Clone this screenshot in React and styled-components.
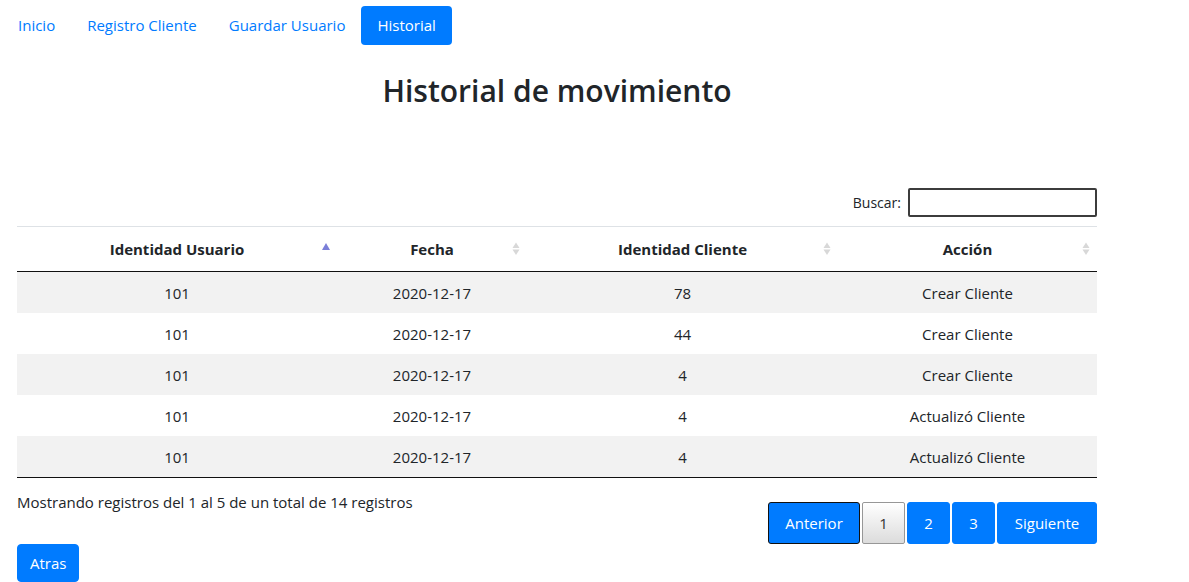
import React from "react";
import styled, { createGlobalStyle } from "styled-components";

const GlobalStyle = createGlobalStyle`
  body {
    margin: 0;
    font-family: "Open Sans", "Noto Sans", sans-serif;
    font-size: 16px;
    color: #212529;
    background: #fff;
  }
`;

const Nav = styled.ul`
  display: flex;
  list-style: none;
  margin: 0;
  padding: 6px 0 0 2px;
`;

const NavLink = styled.a`
  display: block;
  padding: 8px 16px;
  line-height: 23px;
  font-size: 15px;
  border-radius: 4px;
  text-decoration: none;
  color: ${(p) => (p.active ? "#fff" : "#007bff")};
  background: ${(p) => (p.active ? "#007bff" : "transparent")};
`;

const Container = styled.div`
  width: 1080px;
  margin-left: 17px;
`;

const Title = styled.h2`
  margin: 27px 0 0;
  text-align: center;
  font-size: 30px;
  font-weight: 600;
  line-height: 38px;
`;

const SearchRow = styled.div`
  display: flex;
  justify-content: flex-end;
  align-items: center;
  gap: 7px;
  margin-top: 78px;
  margin-bottom: 9px;
  font-size: 14px;
`;

const SearchInput = styled.input`
  height: 25px;
  border: 2px solid #3c3c3c;
  border-radius: 2px;
  padding: 0 4px;
  margin: 0;
  box-sizing: content-box;
  width: 177px;
`;

const Table = styled.table`
  width: 100%;
  table-layout: fixed;
  border-collapse: collapse;
  border-top: 1px solid #dee2e6;
  border-bottom: 1px solid #111;
  font-size: 15px;
`;

const Th = styled.th`
  position: relative;
  box-sizing: border-box;
  height: 45px;
  padding: 0 10px;
  text-align: center;
  font-weight: 700;
  font-size: 15px;
  border-bottom: 1px solid #111;
  width: ${(p) => p.w}px;
`;

const SortIcon = styled.svg`
  position: absolute;
  right: 6px;
  top: 15px;
`;

const Tr = styled.tr`
  background: ${(p) => (p.odd ? "#f2f2f2" : "#fff")};
  & + & td {
    border-top: 1px solid #ddd;
  }
`;

const Td = styled.td`
  height: 41px;
  padding: 0 10px;
  text-align: center;
`;

const Footer = styled.div`
  display: flex;
  justify-content: space-between;
  align-items: flex-start;
`;

const Info = styled.div`
  padding-top: 12px;
  font-size: 15px;
  line-height: 24px;
`;

const Pager = styled.div`
  display: flex;
  gap: 2px;
  padding-top: 24px;
`;

const PageBtn = styled.button`
  height: 42px;
  min-width: ${(p) => p.w || 43}px;
  padding: 0 16px;
  font-family: inherit;
  font-size: 15px;
  border-radius: ${(p) => (p.current ? "2px" : "3px")};
  border: 1px solid ${(p) => (p.dark ? "#111" : p.current ? "#979797" : "#007bff")};
  color: ${(p) => (p.current ? "#333" : "#fff")};
  background: ${(p) =>
    p.current ? "linear-gradient(#fff, #dcdcdc)" : "#007bff"};
`;

const BackBtn = styled.button`
  display: block;
  height: 38px;
  padding: 0 12px;
  font-family: inherit;
  font-size: 15px;
  color: #fff;
  background: #007bff;
  border: 1px solid #007bff;
  border-radius: 4px;
`;

const Sort = ({ asc }) =>
  asc ? (
    <SortIcon width="10" height="14" viewBox="0 0 10 14">
      <path d="M1 8 L5 1 L9 8 Z" fill="#7b7fd8" />
    </SortIcon>
  ) : (
    <SortIcon width="10" height="14" viewBox="0 0 10 14">
      <path d="M1.5 6 L5 0.5 L8.5 6 Z" fill="#d8d8d8" />
      <path d="M1.5 7.5 L5 13 L8.5 7.5 Z" fill="#d8d8d8" />
    </SortIcon>
  );

const rows = [
  ["101", "2020-12-17", "78", "Crear Cliente"],
  ["101", "2020-12-17", "44", "Crear Cliente"],
  ["101", "2020-12-17", "4", "Crear Cliente"],
  ["101", "2020-12-17", "4", "Actualizó Cliente"],
  ["101", "2020-12-17", "4", "Actualizó Cliente"],
];

export default function App() {
  return (
    <>
      <GlobalStyle />
      <Nav>
        <li><NavLink href="#">Inicio</NavLink></li>
        <li><NavLink href="#">Registro Cliente</NavLink></li>
        <li><NavLink href="#">Guardar Usuario</NavLink></li>
        <li><NavLink href="#" active>Historial</NavLink></li>
      </Nav>
      <Container>
        <Title>Historial de movimiento</Title>
        <SearchRow>
          <label>Buscar:</label>
          <SearchInput type="search" />
        </SearchRow>
        <Table>
          <thead>
            <tr>
              <Th w={320}>Identidad Usuario<Sort asc /></Th>
              <Th w={190}>Fecha<Sort /></Th>
              <Th w={311}>Identidad Cliente<Sort /></Th>
              <Th w={259}>Acción<Sort /></Th>
            </tr>
          </thead>
          <tbody>
            {rows.map((r, i) => (
              <Tr key={i} odd={i % 2 === 0}>
                {r.map((c, j) => (
                  <Td key={j}>{c}</Td>
                ))}
              </Tr>
            ))}
          </tbody>
        </Table>
        <Footer>
          <Info>Mostrando registros del 1 al 5 de un total de 14 registros</Info>
          <Pager>
            <PageBtn dark w={92}>Anterior</PageBtn>
            <PageBtn current>1</PageBtn>
            <PageBtn>2</PageBtn>
            <PageBtn>3</PageBtn>
            <PageBtn w={100}>Siguiente</PageBtn>
          </Pager>
        </Footer>
        <BackBtn>Atras</BackBtn>
      </Container>
    </>
  );
}
